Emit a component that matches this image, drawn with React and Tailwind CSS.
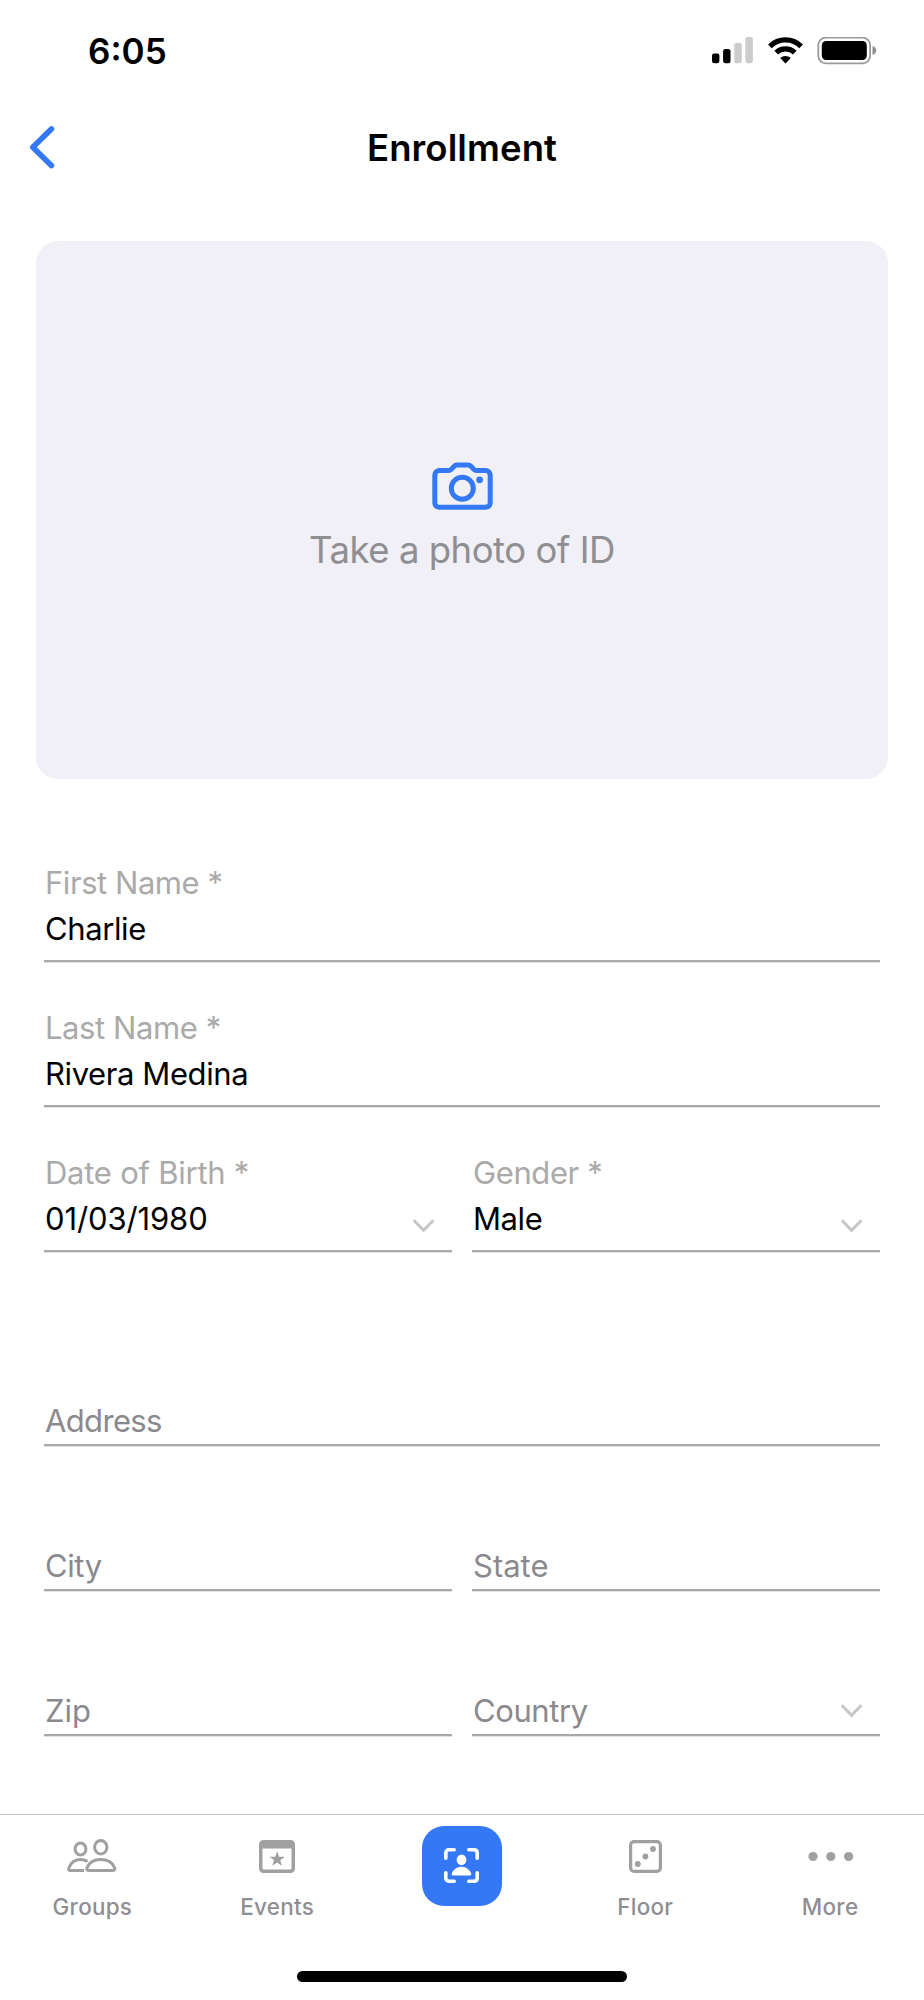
import React, { useState } from 'react';

const CameraIcon = () => (
  <svg width="62" height="49" viewBox="0 0 62 49" fill="none" stroke="#3478f6" strokeWidth="5" strokeLinejoin="round">
    <path d="M8.5 8.5H17.5C18.6 8.5 19.3 8.2 20 7.5L23 4.4C23.9 3.4 24.8 3 26 3H37C38.2 3 39.2 3.4 40.1 4.4L43 7.5C43.7 8.2 44.5 8.5 45.5 8.5H54.5C57 8.5 59.2 10.5 59.2 13V41C59.2 43.5 57 45.3 54.5 45.3H8.5C6 45.3 3.8 43.5 3.8 41V13C3.8 10.5 6 8.5 8.5 8.5Z" />
    <circle cx="31.3" cy="26.3" r="11" />
    <circle cx="48.6" cy="17.8" r="3.4" fill="#3478f6" stroke="none" />
  </svg>
);

const GroupsIcon = () => (
  <svg width="50" height="34" viewBox="0 0 50 34" fill="none" stroke="#a0a0a0" strokeWidth="3">
    <ellipse cx="13.5" cy="10" rx="5.4" ry="5.9" />
    <ellipse cx="33.8" cy="8.3" rx="6.2" ry="6.8" />
    <path d="M17 31.6H3.5C1.7 31.6 1.3 30.6 2 28.8C4 23.6 8.6 20.6 13.6 20.6C16.2 20.6 18.5 21.2 20.6 22.6" />
    <path d="M22 31.6H45.5C47.5 31.6 48.3 30.6 47.6 28.8C45.4 23.5 40 20.6 33.8 20.6C27.6 20.6 22.2 23.5 20 28.8C19.3 30.6 20 31.6 22 31.6Z" />
  </svg>
);

const EventsIcon = () => (
  <svg width="36" height="33" viewBox="0 0 36 33" fill="#a0a0a0">
    <path fillRule="evenodd" d="M4.5 0H31.5C34 0 36 2 36 4.5V28.5C36 31 34 33 31.5 33H4.5C2 33 0 31 0 28.5V4.5C0 2 2 0 4.5 0ZM3.5 8.6V28C3.5 29 4.2 29.6 5 29.6H31C31.8 29.6 32.5 29 32.5 28V8.6Z" />
    <path d="M18.2 11.2L20.1 16.7H25.9L21.3 20.2L23 25.8L18.2 22.4L13.4 25.8L15.1 20.2L10.5 16.7H16.3Z" />
  </svg>
);

const ScanIcon = () => (
  <svg className="mb-[2px]" width="35" height="35" viewBox="0 0 35 35" fill="none" stroke="#fff" strokeWidth="3.6" strokeLinecap="round">
    <path d="M1.8 10.2V5C1.8 3 3 1.8 5 1.8H10.2M24.8 1.8H30C32 1.8 33.2 3 33.2 5V10.2M33.2 24.8V30C33.2 32 32 33.2 30 33.2H24.8M10.2 33.2H5C3 33.2 1.8 32 1.8 30V24.8" />
    <ellipse cx="17.5" cy="11.8" rx="4.9" ry="5.4" fill="#fff" stroke="none" />
    <path d="M9 27.4C7.8 27.4 7.5 26.7 7.9 25.5C9.2 21.5 13 18.7 17.5 18.7C22 18.7 25.8 21.5 27.1 25.5C27.5 26.7 27.2 27.4 26 27.4Z" fill="#fff" stroke="none" />
  </svg>
);

const FloorIcon = () => (
  <svg className="mr-[3px]" width="33" height="33" viewBox="0 0 33 33" fill="#a0a0a0">
    <rect x="1.6" y="1.6" width="29.8" height="29.8" rx="3.5" fill="none" stroke="#a0a0a0" strokeWidth="3.2" />
    <circle cx="24" cy="9" r="2.9" />
    <circle cx="16.4" cy="16.5" r="2.9" />
    <circle cx="8.8" cy="24" r="2.9" />
  </svg>
);

const MoreIcon = () => (
  <svg className="mr-[1px]" width="46" height="33" viewBox="0 0 46 33" fill="#a0a0a0">
    <circle cx="5" cy="16.5" r="4.6" />
    <circle cx="22.8" cy="16.5" r="4.6" />
    <circle cx="40.6" cy="16.5" r="4.6" />
  </svg>
);

const Chevron = () => (
  <svg width="22" height="14" viewBox="0 0 22 14" fill="none" stroke="#c6c6c9" strokeWidth="3">
    <path d="M0.8 1.2L10.6 11.4L20.4 1.2" />
  </svg>
);

const StatusBar = () => (
  <div className="flex h-[102px] items-center justify-between pl-[88px] pr-[47px]">
    <span className="text-[35px] leading-10 font-semibold">6:05</span>
    <div className="flex items-center">
      <svg width="42" height="28" viewBox="0 0 42 28">
        <rect x="0" y="16.4" width="7.4" height="9.9" rx="2.2" />
        <rect x="11.1" y="12" width="7.4" height="14.3" rx="2.2" />
        <rect x="22.2" y="6" width="7.6" height="20.3" rx="2.2" fill="#cccccc" />
        <rect x="33.3" y="0" width="7.6" height="26.3" rx="2.2" fill="#cccccc" />
      </svg>
      <svg className="ml-[14px]" width="35" height="28" viewBox="0 0 35 28" fill="none" stroke="#000" strokeWidth="5.2">
        <path d="M1.9 9.3C10.4 0.8 24.6 0.8 33.1 9.3" />
        <path d="M8.2 15.6C13.4 10.6 21.6 10.6 26.8 15.6" />
        <path d="M17.5 26.4L12.2 21.1C15.2 18.3 19.8 18.3 22.8 21.1Z" fill="#000" stroke="none" />
      </svg>
      <svg className="ml-[14px]" width="60" height="28" viewBox="0 0 60 28">
        <rect x="1.3" y="0.7" width="51.8" height="25.6" rx="7.4" fill="none" stroke="#9b9b9b" strokeWidth="1.8" />
        <rect x="4.8" y="4" width="45" height="19" rx="4.4" />
        <path d="M55.5 8.9C57.9 9.7 59.2 11.5 59.2 13.5C59.2 15.5 57.9 17.3 55.5 18.1Z" fill="#8e8e8e" />
      </svg>
    </div>
  </div>
);

const Field = ({ label, value, select, labelClass = '', valueClass = 'tracking-[-0.4px]' }) => (
  <div className={`flex h-[145px] flex-1 items-end justify-between border-b-2 border-[#a9a9a9] pl-[1px] text-[31px] leading-10 shadow-[0_1px_0_#e2e2e2] ${value ? 'pb-[11px]' : 'pb-[3px]'}`}>
    {value ? (
      <div className="flex flex-col gap-[6px]">
        <span className={`text-[#aaaaaa] ${labelClass}`}>{label}</span>
        <span className={`text-black ${valueClass}`}>{value}</span>
      </div>
    ) : (
      <span className={`text-[#8a8a8e] ${labelClass}`}>{label}</span>
    )}
    {select && <div className={value ? 'mr-[17px] mb-[6px]' : 'mr-[17px] mb-[13px]'}><Chevron /></div>}
  </div>
);

const tabs = [
  { name: 'Groups', icon: <GroupsIcon /> },
  { name: 'Events', icon: <EventsIcon /> },
  { name: 'Scan', icon: <ScanIcon />, primary: true },
  { name: 'Floor', icon: <FloorIcon />, labelClass: 'mr-[3px]' },
  { name: 'More', icon: <MoreIcon />, labelClass: 'mr-[3px]' },
];

const App = () => {
  const [form] = useState({
    firstName: 'Charlie', lastName: 'Rivera Medina', dob: '01/03/1980', gender: 'Male',
    address: '', city: '', state: '', zip: '', country: ''
  });

  return (
    <div className="flex h-[2000px] w-[924px] flex-col overflow-hidden bg-white font-[Inter,sans-serif] text-black">
      <StatusBar />

      {/* HEADER */}
      <header className="grid h-[92px] grid-cols-[1fr_auto_1fr] items-center">
        <svg className="mb-[2px] ml-[28px]" width="27" height="44" viewBox="0 0 27 44" fill="none" stroke="#3478f6" strokeWidth="5.6" strokeLinecap="round" strokeLinejoin="round">
          <path d="M23.4 3.9L4.8 22.2L23.4 40.5" />
        </svg>
        <h1 className="mb-[1px] text-[36.5px] leading-10 font-semibold tracking-[0.1px]">Enrollment</h1>
      </header>

      <div className="mx-9 mt-[47px] flex h-[538px] shrink-0 flex-col items-center rounded-[22px] bg-[#f1f0f6] pt-[221px]">
        <CameraIcon />
        <span className="mt-[19px] text-[36.5px] leading-10 tracking-[-0.47px] text-[#8e8e93]">Take a photo of ID</span>
      </div>

      {/* FORM */}
      <div className="mx-11 mt-[38px]">
        <div className="flex"><Field label="First Name *" value={form.firstName} labelClass="tracking-[-0.45px]" /></div>
        <div className="flex"><Field label="Last Name *" value={form.lastName} labelClass="tracking-[-0.42px]" /></div>
        <div className="flex gap-5">
          <Field label="Date of Birth *" value={form.dob} select labelClass="tracking-[-0.25px]" valueClass="tracking-[-0.12px]" />
          <Field label="Gender *" value={form.gender} select labelClass="tracking-[-0.4px]" />
        </div>
        <div className="mt-[49px] flex"><Field label="Address" value={form.address} labelClass="tracking-[-0.65px]" /></div>
        <div className="flex gap-5">
          <Field label="City" value={form.city} labelClass="tracking-[-0.4px]" />
          <Field label="State" value={form.state} />
        </div>
        <div className="flex gap-5">
          <Field label="Zip" value={form.zip} />
          <Field label="Country" value={form.country} select labelClass="tracking-[-0.4px]" />
        </div>
      </div>

      {/* TAB BAR */}
      <nav className="mt-auto flex h-[186px] shrink-0 flex-col border-t border-[#c4c4c4]">
        <div className="flex h-[155px]">
          {tabs.map(tab => tab.primary ? (
            <div key={tab.name} className="flex flex-1 justify-center pt-[11px]">
              <div className="flex h-20 w-20 items-center justify-center rounded-[22px] bg-[#3478f6]">{tab.icon}</div>
            </div>
          ) : (
            <div key={tab.name} className="flex flex-1 flex-col items-center pt-[24px]">
              <div className="flex h-[34px] items-center">{tab.icon}</div>
              <span className={`mt-[18px] text-[22.4px] leading-8 font-medium tracking-[0.3px] text-[#8e8e93] ${tab.labelClass || ''}`}>{tab.name}</span>
            </div>
          ))}
        </div>
        <div className="mx-auto mt-[1px] h-[11px] w-[330px] rounded-full bg-black" />
      </nav>
    </div>
  );
};

export default App;
